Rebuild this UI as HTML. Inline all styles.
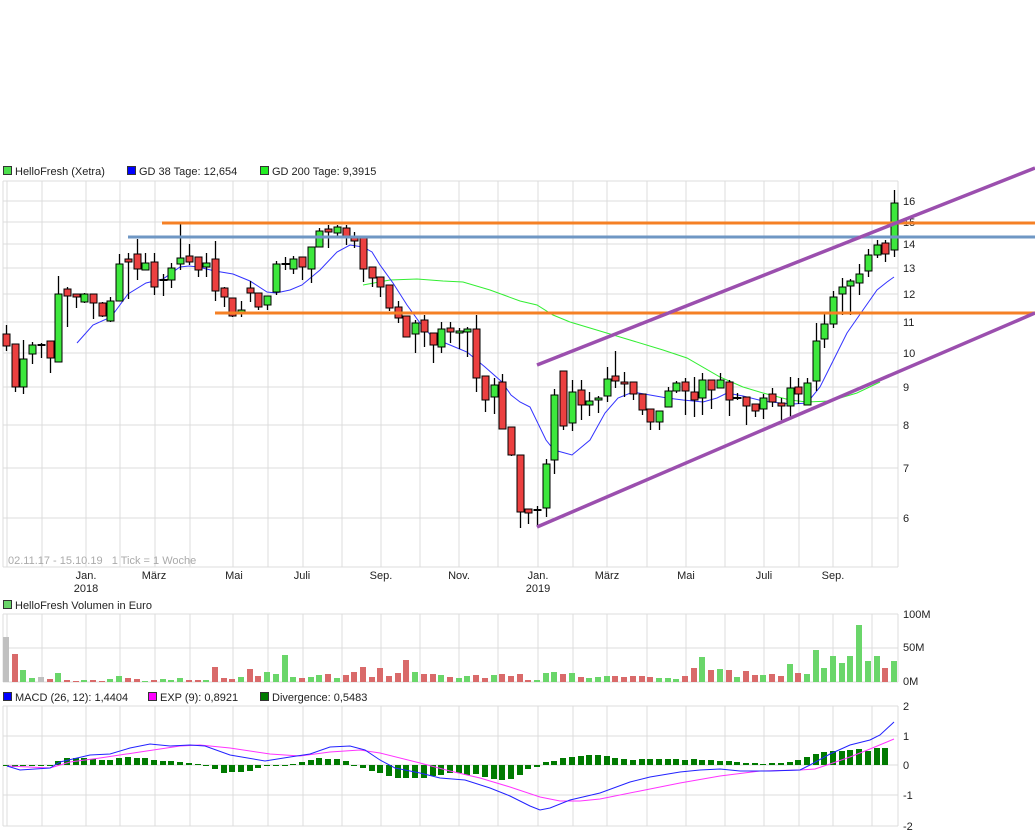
<!DOCTYPE html>
<html><head><meta charset="utf-8"><style>
body{margin:0;background:#fff;}
svg{display:block;font-family:"Liberation Sans",sans-serif;}
</style></head><body>
<svg id="s" width="1035" height="833" xmlns="http://www.w3.org/2000/svg"></svg>
<script>
var s=document.getElementById('s');var o='';
function L(x1,y1,x2,y2,c,w){o+='<line x1="'+x1+'" y1="'+y1+'" x2="'+x2+'" y2="'+y2+'" stroke="'+c+'" stroke-width="'+(w||1)+'"/>';}
function R(x,y,w,h,f,st){o+='<rect x="'+x+'" y="'+y+'" width="'+w+'" height="'+h+'" fill="'+f+'"'+(st?' stroke="'+st+'" stroke-width="1"':'')+'/>';}
function T(x,y,t,c,a,sz){o+='<text x="'+x+'" y="'+y+'" fill="'+(c||'#222')+'" font-size="'+(sz||11)+'"'+(a?' text-anchor="'+a+'"':'')+'>'+t+'</text>';}
function P(pts,c,w){o+='<polyline fill="none" stroke="'+c+'" stroke-width="'+(w||1)+'" points="'+pts.map(function(p){return p.join(',')}).join(' ')+'"/>';}
var G='#dcdcdc';
var vx=[3,7,42,86,120,155,190,233,268,303,342,381,420,459,498,538,573,607,647,686,725,764,799,833,872,898];
[181,201,222,244,268,294,322,353,387,425,468,518,567].forEach(function(y){L(3,y,898,y,G);});
vx.forEach(function(x){L(x,181,x,567,G);L(x,614,x,682,G);L(x,706,x,826,G);});
[614,648,682].forEach(function(y){L(3,y,898,y,G);});
[706,736,765,795,826].forEach(function(y){L(3,y,898,y,G);});
[[16,201],[15,222],[14,244],[13,268],[12,294],[11,322],[10,353],[9,387],[8,425],[7,468],[6,518]].forEach(function(p){T(903,p[1]+4,p[0]);});
T(903,618,'100M');T(903,651,'50M');T(903,685,'0M');
[['2',706],['1',736],['0',765],['-1',795],['-2',826]].forEach(function(p){T(903,p[1]+4,p[0]);});
[['Jan.',86],['März',154],['Mai',234],['Juli',302],['Sep.',381],['Nov.',459],['Jan.',538],['März',607],['Mai',686],['Juli',764],['Sep.',833]].forEach(function(p){T(p[1],579,p[0],'#222','middle');});
T(86,592,'2018','#222','middle');T(538,592,'2019','#222','middle');
T(8,564,'02.11.17 - 15.10.19 &#160; 1 Tick = 1 Woche','#aaa');
function LG(x,y,c,t){R(x+0.5,y-8.5,8,8,c,'#333');T(x+12,y,t);}
LG(3,175,'#4de04d','HelloFresh (Xetra)');LG(127,175,'#0000ff','GD 38 Tage: 12,654');LG(260,175,'#22ee22','GD 200 Tage: 9,3915');
LG(3,609,'#6ad66a','HelloFresh Volumen in Euro');
LG(3,701,'#0000ff','MACD (26, 12): 1,4404');LG(148,701,'#ff00ff','EXP (9): 0,8921');LG(260,701,'#007a00','Divergence: 0,5483');
var C=[[334,346,325,351,0],[344,387,344,392,0],[359,387,340,394,1],[345,354,342,364,1],[345,345,343,358,2],[341,358,341,373,0],[294,362,276,362,1],[289,296,287,327,0],[294,297,294,308,0],[294,302,293,303,1],[294,303,294,319,0],[303,316,302,317,0],[301,321,297,322,1],[264,301,254,301,1],[259,262,253,299,0],[254,269,239,280,0],[263,270,253,270,1],[262,287,253,295,0],[280,280,274,296,2],[268,280,263,288,1],[258,264,224,270,1],[256,262,244,265,0],[257,270,257,277,0],[263,267,253,277,1],[259,291,241,301,0],[288,297,287,307,0],[298,316,298,317,0],[310,313,301,317,1],[288,293,281,302,0],[293,307,293,310,0],[296,305,296,310,1],[264,292,261,295,1],[264,264,257,270,2],[259,269,256,274,1],[257,267,257,280,0],[247,269,247,283,1],[231,247,228,247,1],[229,232,225,248,0],[227,233,225,236,1],[228,236,225,245,0],[238,241,232,248,0],[238,269,238,282,0],[267,278,267,287,0],[277,287,277,297,0],[285,308,285,311,0],[307,318,301,323,0],[316,337,316,337,0],[323,334,320,353,1],[320,332,315,347,0],[333,345,333,363,0],[329,347,322,353,1],[328,332,322,343,0],[331,333,328,349,1],[329,332,327,357,1],[329,378,315,392,0],[376,400,376,412,0],[385,397,378,414,1],[382,429,374,429,0],[427,455,427,456,0],[455,512,455,528,0],[509,513,509,524,0],[510,510,506,527,2],[464,508,459,517,1],[395,460,389,474,1],[371,426,371,430,0],[392,423,380,431,1],[390,405,380,420,0],[401,405,392,416,1],[398,400,396,413,1],[379,396,367,402,1],[376,381,351,388,0],[382,384,372,397,0],[382,394,382,400,0],[394,410,394,415,0],[409,422,409,430,0],[411,422,411,430,1],[391,407,387,407,1],[383,391,381,393,1],[382,391,378,415,0],[392,400,377,417,0],[380,398,373,415,1],[380,390,380,409,0],[380,388,373,388,1],[382,400,380,416,0],[398,398,393,400,2],[397,406,397,425,0],[404,411,404,417,0],[398,409,394,419,1],[394,402,388,407,0],[403,406,398,420,0],[388,406,377,417,1],[387,394,378,404,0],[383,405,378,405,1],[341,381,323,391,1],[324,339,313,348,1],[297,324,291,328,1],[287,294,278,315,1],[281,286,279,315,1],[274,283,264,295,1],[255,271,249,277,1],[245,255,240,258,1],[243,254,240,262,0],[203,250,190,257,1]];
var sp=888/102;
P([[363,285],[390,280],[417,279],[443,281],[463,282],[490,290],[520,301],[537,305],[553,315],[570,322],[590,328],[630,340],[663,350],[687,358],[720,377],[743,387],[763,393],[790,400],[807,402],[830,401],[857,393],[880,382]],'#33ee33',1);
P([[77,343],[93,325],[111,317],[128,294],[146,283],[163,279],[180,267],[189,266],[198,267],[215,271],[233,274],[250,281],[267,292],[276,293],[290,290],[302,285],[320,270],[337,252],[350,245],[363,247],[372,252],[380,265],[393,283],[407,305],[420,323],[433,338],[450,345],[467,352],[485,367],[502,382],[511,395],[520,402],[530,407],[546,440],[554,450],[572,455],[590,440],[605,413],[618,398],[633,392],[650,395],[667,398],[683,400],[703,402],[717,398],[727,393],[743,396],[763,401],[780,403],[793,404],[807,403],[820,387],[830,367],[847,333],[863,310],[877,290],[887,282],[894,277]],'#3333ff',1);
C.forEach(function(c,i){var x=Math.round(6+sp*i)+0.5;L(x,c[2],x,c[3],'#000',1.3);
 if(c[4]==2){L(x-4,c[0],x+4,c[0],'#000',2);}else{var h=Math.max(c[1]-c[0],2);R(x-3.5,c[0],7,h,c[4]?'#3de83d':'#ec4040','#000');}});
L(162,223,1035,223,'#f58025',3);L(128,237,1035,237,'#6f97c4',3);L(215,313,1035,313,'#f58025',3);
L(537,365,1035,168,'#9b4fae',3.5);L(537,527,1035,313,'#9b4fae',3.5);
var V=[45,28,12,4,5,3,9,2,1,2,2,1,3,6,4,3,1,2,3,2,4,2,2,2,15,4,3,5,13,6,10,8,27,5,4,5,7,8,4,7,10,15,5,14,6,9,22,10,8,8,7,5,4,6,7,4,7,8,6,8,2,2,9,10,8,9,5,4,5,6,6,5,6,6,5,4,4,3,6,14,25,12,13,12,5,11,7,7,8,6,18,9,8,32,14,26,19,26,57,21,26,14,21];
V.forEach(function(h,i){var x=Math.round(6+sp*i);var c=C[i];var col=i==0||i==4?'#c0c0c0':(c[4]==0?'#d96a6a':'#6ad66a');R(x-3,682-h,6,h,col);});
var D=[0,-2,-1,-1,-1,-1,4,7,7,7,6,5,5,7,8,7,7,5,4,4,3,2,1,-1,-4,-8,-7,-7,-6,-3,-1,-1,-1,1,3,5,7,6,6,4,-1,-3,-6,-8,-11,-13,-13,-13,-13,-11,-10,-8,-8,-10,-9,-12,-14,-15,-14,-10,-4,-2,3,4,7,8,9,10,10,9,7,6,5,6,6,6,6,6,5,6,5,5,4,4,3,2,2,1,2,2,3,5,8,11,13,14,14,15,16,14,17,17];
D.forEach(function(v,i){var x=Math.round(6+sp*i);if(v>=0)R(x-3,765-v,6,Math.max(v,1),'#007a00');else R(x-3,765,6,-v,'#007a00');});
P([[7,766],[50,768],[70,762],[100,758],[140,752],[180,746],[200,745],[230,748],[270,754],[300,756],[330,752],[360,750],[380,753],[420,763],[450,771],[480,778],[510,787],[540,797],[560,801],[580,801],[600,799],[640,791],[680,783],[720,776],[760,771],[800,770],[815,769],[830,764],[850,757],[870,749],[894,739]],'#ff33ff',1);
P([[7,766],[20,770],[50,768],[60,762],[90,755],[110,754],[130,748],[150,744],[170,746],[190,745],[205,746],[230,755],[265,761],[290,757],[310,754],[330,747],[350,746],[365,750],[380,760],[395,768],[420,773],[440,778],[465,780],[490,788],[510,796],[530,806],[540,810],[550,808],[570,800],[600,793],[630,782],[650,777],[680,772],[700,770],[720,769],[740,771],[770,771],[800,770],[810,765],[830,754],[850,745],[870,740],[880,735],[894,722]],'#2222ff',1);
s.innerHTML=o;
</script>
</body></html>
